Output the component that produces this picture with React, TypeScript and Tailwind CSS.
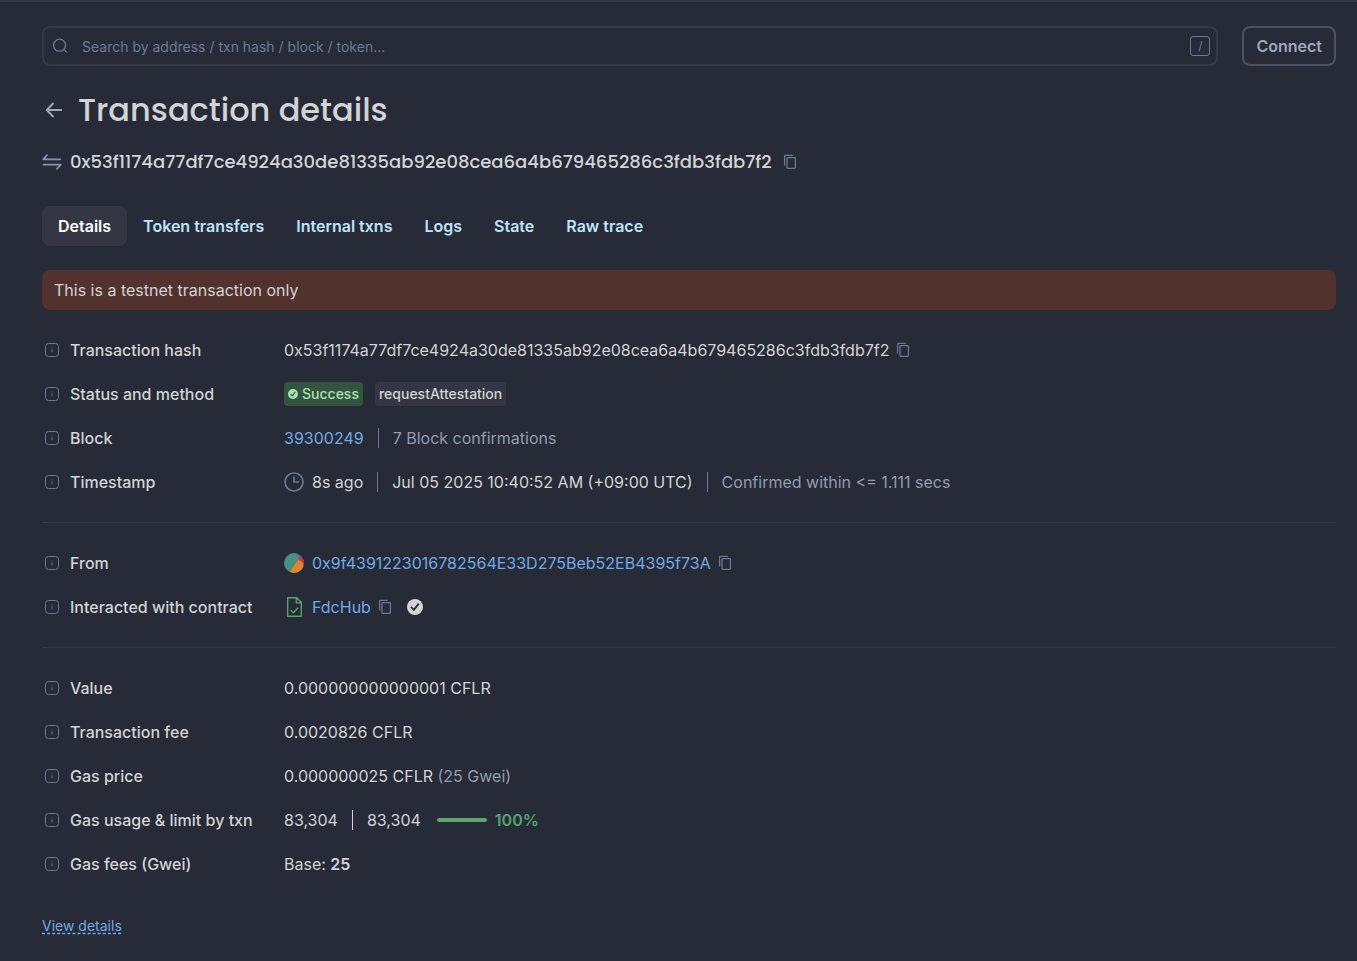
import type { ReactNode } from 'react';

const HASH = '0x53f1174a77df7ce4924a30de81335ab92e08cea6a4b679465286c3fdb3fdb7f2';

function CopyButton() {
  return (
    <button type="button" aria-label="Copy" className="flex h-5 w-5 shrink-0 items-center justify-center text-[#6d768d]">
      <svg viewBox="0 0 20 20" className="h-5 w-5" fill="none" stroke="currentColor" strokeWidth="1.3">
        <rect x="7" y="5.7" width="8.4" height="10.6" rx="0.8" />
        <path d="M4.6 13.6V4.1c0-.5.3-.8.8-.8h7.4" />
      </svg>
    </button>
  );
}

function InfoIcon() {
  return (
    <svg viewBox="0 0 20 20" className="h-5 w-5 shrink-0 text-[#6f7890]" fill="none" aria-hidden="true">
      <rect x="3.5" y="3.5" width="13" height="13" rx="3" stroke="currentColor" />
      <path d="M10 9.2v3M10 7.4v.9" stroke="currentColor" strokeWidth="1.1" opacity=".8" />
    </svg>
  );
}

function CheckCircle({ className, mark }: { className: string; mark: string }) {
  return (
    <svg viewBox="0 0 20 20" className={className} aria-hidden="true">
      <circle cx="10" cy="10" r="10" fill="currentColor" />
      <path d="M5.6 10.6l3 3 5.6-7.2" fill="none" stroke={mark} strokeWidth="2.2" strokeLinecap="round" strokeLinejoin="round" />
    </svg>
  );
}

function Separator({ className }: { className: string }) {
  return <span className={`mx-3.5 h-5 w-px shrink-0 ${className}`} />;
}

function Row({ label, children }: { label: string; children: ReactNode }) {
  return (
    <div className="grid min-h-6 grid-cols-[234px_minmax(0,1fr)] items-center gap-x-2">
      <dt className="flex items-center gap-2 font-medium">
        <InfoIcon />
        {label}
      </dt>
      <dd className="flex items-center">{children}</dd>
    </div>
  );
}

function Section({ children }: { children: ReactNode }) {
  return (
    <dl className="flex flex-col gap-5 border-b border-[#333845] py-7 last:border-b-0 last:pb-0">{children}</dl>
  );
}

const tabs = ['Details', 'Token transfers', 'Internal txns', 'Logs', 'State', 'Raw trace'];

export default function App() {
  return (
    <div className="min-h-screen border-t-2 border-[#343844] bg-[#262b37] font-['Inter',sans-serif] text-base text-[#d2d3d5]">
      <div className="px-[42px] pr-[21px] pt-6 pb-6">
        <header className="flex items-center gap-6">
          <form className="flex h-10 flex-1 items-center rounded-lg border-2 border-[#343945] pr-1.5 pl-2" onSubmit={(e) => e.preventDefault()}>
            <svg viewBox="0 0 20 20" className="mr-2.5 h-5 w-5 shrink-0 text-[#6f7890]" fill="none" stroke="currentColor" strokeWidth="1.3" strokeLinecap="round" aria-hidden="true">
              <circle cx="7.6" cy="9.2" r="6" />
              <path d="M12.1 13.6l2.5 2.5" />
            </svg>
            <input
              type="text"
              aria-label="Search"
              placeholder="Search by address / txn hash / block / token..."
              className="h-6 min-w-0 flex-1 bg-transparent text-sm outline-none placeholder:text-[#717a93]"
            />
            <kbd className="flex h-5 w-5 items-center justify-center rounded-[3px] border border-[#6f7890] font-['Inter',sans-serif] text-xs text-[#717a93]">/</kbd>
          </form>
          <button type="button" className="h-10 rounded-lg border-2 border-[#4b5264] px-3 font-semibold text-[#a0a7bb]">
            Connect
          </button>
        </header>

        <main>
          <div className="mt-6 flex h-10 items-center gap-3">
            <a href="#back" aria-label="Back" className="text-[#a0a7bb]">
              <svg viewBox="0 0 24 24" className="h-6 w-6" fill="none" stroke="currentColor" strokeWidth="1.9" strokeLinecap="round" strokeLinejoin="round">
                <path d="M19.2 12H5M11 5.5L4.8 12l6.2 6.5" />
              </svg>
            </a>
            <h1 className="font-['Poppins','Inter',sans-serif] text-[32px] leading-10 font-medium">Transaction details</h1>
          </div>

          <div className="mt-5 flex h-6 items-center gap-2">
            <svg viewBox="0 0 20 20" className="h-5 w-5 shrink-0 text-[#8b93a8]" fill="none" stroke="currentColor" strokeWidth="1.7" strokeLinecap="round" strokeLinejoin="round" aria-hidden="true">
              <path d="M18.3 7.3H1.2L5 3.2M1.5 12.7h17.3L15 16.8" />
            </svg>
            <span className="font-['Poppins','Inter',sans-serif] text-lg leading-6 font-medium">{HASH}</span>
            <CopyButton />
          </div>

          <nav className="mt-8 flex">
            {tabs.map((tab, i) => (
              <button
                key={tab}
                type="button"
                className={
                  i === 0
                    ? 'h-10 rounded-lg bg-[#343743] px-4 font-semibold text-white'
                    : 'h-10 rounded-lg px-4 font-semibold text-[#bee3f8]'
                }
              >
                {tab}
              </button>
            ))}
          </nav>

          <div role="alert" className="mt-6 rounded-lg bg-[#51322c] px-3 py-2 leading-6">
            This is a testnet transaction only
          </div>

          <div>
            <Section>
              <Row label="Transaction hash">
                <span className="mr-1">{HASH}</span>
                <CopyButton />
              </Row>
              <Row label="Status and method">
                <span className="flex h-6 items-center gap-1 rounded-sm bg-[#345440] px-1 text-sm font-medium text-[#a5e3b5]">
                  <CheckCircle className="h-2.5 w-2.5" mark="#345440" />
                  Success
                </span>
                <span className="ml-3 flex h-6 items-center rounded-sm bg-[#343743] px-1 text-sm font-medium">requestAttestation</span>
              </Row>
              <Row label="Block">
                <a href="#block" className="text-[#71a9e8]">39300249</a>
                <Separator className="bg-[#6f7890]" />
                <span className="text-[#949bb0]">7 Block confirmations</span>
              </Row>
              <Row label="Timestamp">
                <svg viewBox="0 0 20 20" className="mr-2 h-5 w-5 text-[#6f7890]" fill="none" stroke="currentColor" strokeWidth="1.7" aria-hidden="true">
                  <circle cx="10" cy="10" r="9" />
                  <path d="M10 4.5V10h5" />
                </svg>
                8s ago
                <Separator className="bg-[#6f7890]" />
                Jul 05 2025 10:40:52 AM (+09:00 UTC)
                <Separator className="bg-[#6f7890]" />
                <span className="text-[#949bb0]">Confirmed within &lt;= 1.111 secs</span>
              </Row>
            </Section>

            <Section>
              <Row label="From">
                <svg viewBox="0 0 20 20" className="mr-2 h-5 w-5 overflow-hidden rounded-full" aria-hidden="true">
                  <rect width="20" height="20" fill="#489182" />
                  <path d="M11 0l8 7 1-7z" fill="#356b78" />
                  <path d="M15 3l5 4v11l-6-8z" fill="#d22b55" />
                  <path d="M5 20L14.500 6.500 19 10v10z" fill="#e38627" />
                </svg>
                <a href="#from" className="mr-1 text-[#71a9e8]">0x9f4391223016782564E33D275Beb52EB4395f73A</a>
                <CopyButton />
              </Row>
              <Row label="Interacted with contract">
                <svg viewBox="0 0 20 20" className="mr-2 h-5 w-5 text-[#57a36a]" fill="none" stroke="currentColor" strokeWidth="1.4" strokeLinejoin="round" aria-hidden="true">
                  <path d="M3.700.8h9l4.600 4.800v13.600H3.700zM12.300.8v5.100h5" />
                  <path d="M7 13.400l2.500 2.300 4.300-4.600" strokeLinecap="round" />
                </svg>
                <a href="#contract" className="mr-1 text-[#71a9e8]">FdcHub</a>
                <CopyButton />
                <CheckCircle className="ml-3 h-4 w-4 text-[#d2d3d5]" mark="#262b37" />
              </Row>
            </Section>

            <Section>
              <Row label="Value">0.000000000000001 CFLR</Row>
              <Row label="Transaction fee">0.0020826 CFLR</Row>
              <Row label="Gas price">
                <span>
                  0.000000025 CFLR <span className="text-[#949bb0]">(25 Gwei)</span>
                </span>
              </Row>
              <Row label="Gas usage & limit by txn">
                83,304
                <Separator className="bg-[#d2d3d5]" />
                83,304
                <span className="mr-2 ml-4 h-1 w-[50px] rounded-full bg-[#5ea66d]" />
                <span className="font-semibold text-[#57a36a]">100%</span>
              </Row>
              <Row label="Gas fees (Gwei)">
                <span>
                  Base: <span className="font-semibold">25</span>
                </span>
              </Row>
            </Section>
          </div>

          <button type="button" className="mt-10 block text-sm text-[#71a9e8] underline decoration-dashed underline-offset-2">
            View details
          </button>
        </main>
      </div>
    </div>
  );
}
